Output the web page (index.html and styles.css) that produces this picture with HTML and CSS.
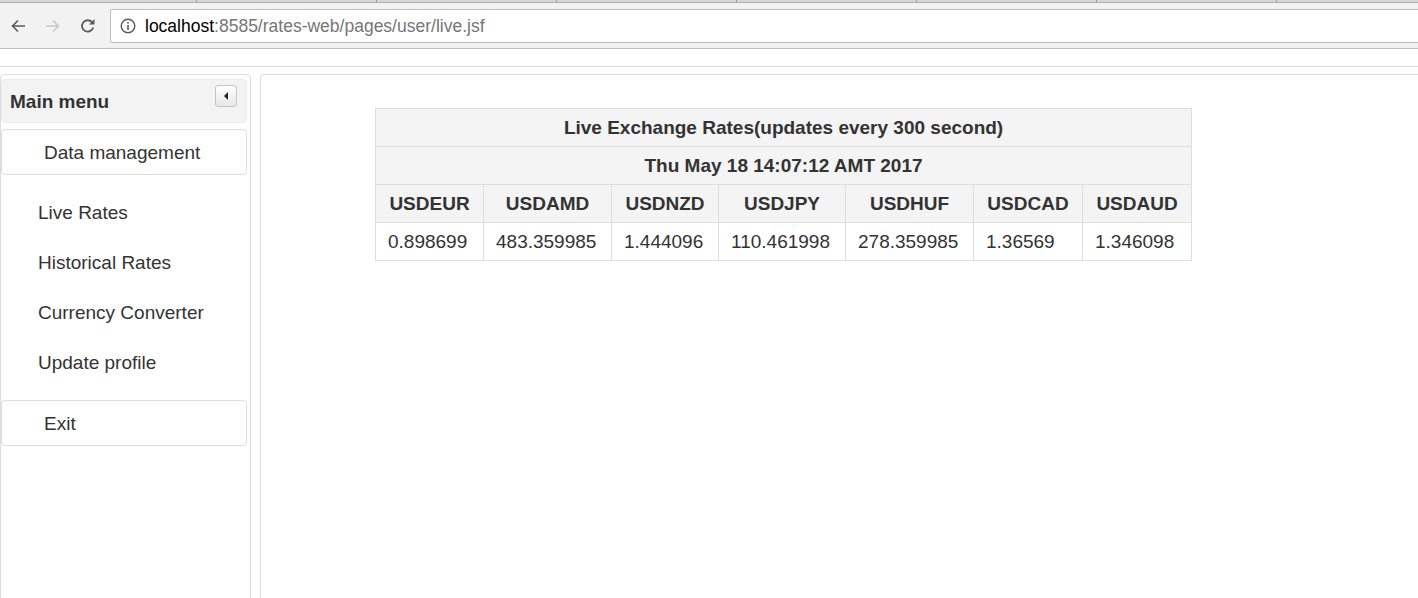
FILE: index.html
```html
<!DOCTYPE html>
<html>
<head>
<meta charset="utf-8">
<title>Live Rates</title>
<link rel="stylesheet" href="styles.css">
</head>
<body>
<div class="chrome">
  <div class="tabstrip">
    <span class="tab"></span><span class="tab"></span><span class="tab"></span><span class="tab"></span><span class="tab"></span><span class="tab"></span><span class="tab"></span><span class="tab"></span>
  </div>
  <div class="toolbar">
    <span class="navbtn">
      <svg width="16" height="16" viewBox="0 0 16 16"><path d="M15 8H2.5M8 2.5L2.5 8 8 13.5" fill="none" stroke="#5a5a5a" stroke-width="1.6"/></svg>
    </span>
    <span class="navbtn">
      <svg width="16" height="16" viewBox="0 0 16 16"><path d="M1 8h12.5M8 2.5L13.5 8 8 13.5" fill="none" stroke="#c8c8c8" stroke-width="1.6"/></svg>
    </span>
    <span class="navbtn">
      <svg width="18" height="18" viewBox="0 0 18 18"><path d="M14.2 10.5A5.7 5.7 0 1 1 13 5.2" fill="none" stroke="#5a5a5a" stroke-width="1.8"/><path d="M15.5 2v5.5H10z" fill="#5a5a5a"/></svg>
    </span>
    <div class="omnibox">
      <svg class="info" width="16" height="16" viewBox="0 0 16 16"><circle cx="8" cy="8" r="6.8" fill="none" stroke="#5a5a5a" stroke-width="1.4"/><rect x="7.2" y="7" width="1.6" height="5" fill="#5a5a5a"/><rect x="7.2" y="4" width="1.6" height="1.6" fill="#5a5a5a"/></svg>
      <span class="url"><span class="host">localhost</span>:8585/rates-web/pages/user/live.jsf</span>
    </div>
  </div>
</div>
<div class="page">
  <div class="topbar"></div>
  <div class="layout">
    <aside class="sidebar">
      <div class="menu-head">
        <span class="menu-title">Main menu</span>
        <span class="toggle"><span class="tri"></span></span>
      </div>
      <div class="menu-box">Data management</div>
      <ul class="menu-list">
        <li>Live Rates</li>
        <li>Historical Rates</li>
        <li>Currency Converter</li>
        <li>Update profile</li>
      </ul>
      <div class="menu-box">Exit</div>
    </aside>
    <main class="content">
      <table class="rates">
        <colgroup>
          <col class="c1"><col class="c2"><col class="c3"><col class="c4"><col class="c5"><col class="c6"><col class="c7">
        </colgroup>
        <thead>
          <tr><th colspan="7">Live Exchange Rates(updates every 300 second)</th></tr>
          <tr><th colspan="7">Thu May 18 14:07:12 AMT 2017</th></tr>
          <tr><th>USDEUR</th><th>USDAMD</th><th>USDNZD</th><th>USDJPY</th><th>USDHUF</th><th>USDCAD</th><th>USDAUD</th></tr>
        </thead>
        <tbody>
          <tr><td>0.898699</td><td>483.359985</td><td>1.444096</td><td>110.461998</td><td>278.359985</td><td>1.36569</td><td>1.346098</td></tr>
        </tbody>
      </table>
    </main>
  </div>
</div>
</body>
</html>
```
FILE: styles.css
```css
html, body {
  margin: 0;
  padding: 0;
  background: #fff;
  overflow: hidden;
}
body {
  font-family: "Liberation Sans", Arial, sans-serif;
  color: #333;
  width: 1418px;
  height: 598px;
}

/* browser chrome */
.chrome {
  height: 49px;
}
.tabstrip {
  height: 2px;
  background: #d6d6d6;
  border-bottom: 1px solid #b0b0b0;
  display: flex;
  padding-left: 17px;
}
.tab {
  width: 179px;
  flex: none;
  border-right: 1px solid #9a9a9a;
}
.toolbar {
  height: 45px;
  background: #f2f2f2;
  border-bottom: 1px solid #bdbdbd;
  display: flex;
  align-items: flex-start;
  padding-left: 1px;
}
.navbtn {
  width: 34px;
  height: 34px;
  margin-top: 6px;
  display: flex;
  align-items: center;
  justify-content: center;
  flex: none;
}
.navbtn + .navbtn {
  margin-left: 1px;
}
.omnibox {
  margin-top: 6px;
  margin-left: 5px;
  height: 34px;
  box-sizing: border-box;
  flex: 1;
  margin-right: -20px;
  background: #fff;
  border: 1px solid #bdbdbd;
  border-radius: 2px;
  display: flex;
  align-items: center;
  padding-left: 9px;
}
.info {
  flex: none;
}
.url {
  margin-left: 9px;
  font-size: 17.5px;
  color: #767676;
  white-space: nowrap;
}
.host {
  color: #000;
}

/* page */
.page {
  height: 549px;
}
.topbar {
  height: 17px;
  border-bottom: 1px solid #ddd;
}
.layout {
  margin-top: 7px;
  display: flex;
  gap: 9px;
  height: 540px;
}
.sidebar {
  width: 251px;
  flex: none;
  box-sizing: border-box;
  border: 1px solid #ddd;
  border-radius: 4px;
  padding: 4px 3px 0 0;
  font-size: 19px;
}
.menu-head {
  height: 44px;
  box-sizing: border-box;
  background: #f3f3f3;
  border: 1px solid #ececec;
  border-radius: 4px;
  display: flex;
  justify-content: space-between;
  align-items: flex-start;
  padding: 0 9px 0 8px;
}
.menu-title {
  font-weight: bold;
  line-height: 42px;
  padding-top: 1px;
}
.toggle {
  margin-top: 5px;
  width: 22px;
  height: 22px;
  box-sizing: border-box;
  border: 1px solid #c6c6c6;
  border-radius: 3px;
  background: linear-gradient(#ffffff, #e6e6e6);
  display: flex;
  align-items: center;
  justify-content: center;
}
.tri {
  width: 0;
  height: 0;
  border-top: 4px solid transparent;
  border-bottom: 4px solid transparent;
  border-right: 4px solid #222;
  margin-right: 1px;
}
.menu-box {
  height: 46px;
  box-sizing: border-box;
  border: 1px solid #ddd;
  border-radius: 4px;
  padding: 1px 0 0 42px;
  line-height: 43px;
  margin-top: 6px;
}
.menu-list {
  list-style: none;
  margin: 12px 0 13px 0;
  padding: 0;
}
.menu-list li {
  height: 50px;
  box-sizing: border-box;
  line-height: 49px;
  padding: 1px 0 0 37px;
}
.content {
  flex: 1;
  box-sizing: border-box;
  border: 1px solid #ddd;
  border-right: none;
  border-radius: 4px 0 0 0;
  padding: 33px 0 0 114px;
}

/* table */
.rates {
  border-collapse: collapse;
  table-layout: fixed;
  width: 816px;
  font-size: 19px;
  color: #333;
}
.c1 { width: 108px; }
.c2 { width: 128px; }
.c3 { width: 107px; }
.c4 { width: 127px; }
.c5 { width: 128px; }
.c6 { width: 109px; }
.c7 { width: 109px; }
.rates th, .rates td {
  border: 1px solid #dedede;
  height: 37px;
  padding: 0;
  text-align: center;
  white-space: nowrap;
}
.rates th {
  background: #f4f4f4;
  font-weight: bold;
}
.rates td {
  background: #fff;
  text-align: left;
  padding-left: 12px;
}
```
